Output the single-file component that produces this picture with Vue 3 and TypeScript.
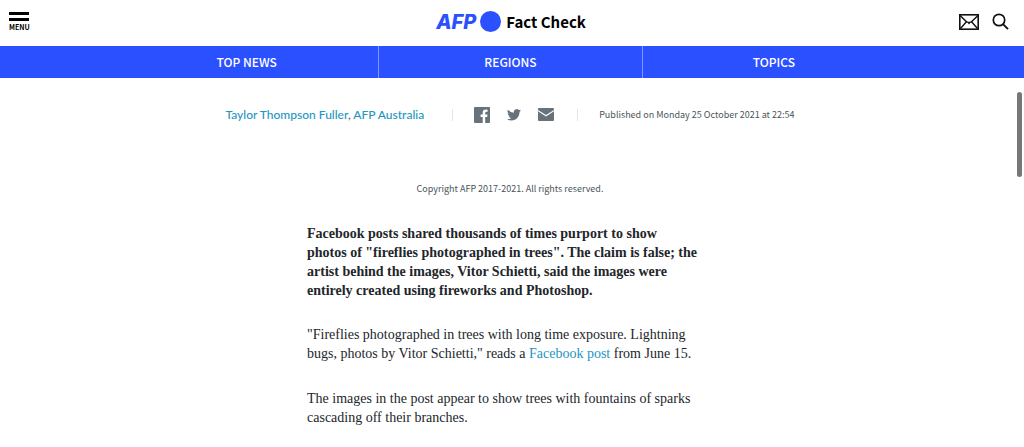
<script setup lang="ts">
interface NavItem {
  label: string
  href: string
}

const navItems: NavItem[] = [
  { label: 'TOP NEWS', href: '#top-news' },
  { label: 'REGIONS', href: '#regions' },
  { label: 'TOPICS', href: '#topics' },
]
</script>

<template>
  <div class="page">
    <header class="header">
      <button class="menu" type="button">
        <span class="bar"></span>
        <span class="bar"></span>
        <span class="menu-label">MENU</span>
      </button>
      <a class="brand" href="#home">
        <span class="afp">AFP</span>
        <span class="dot"></span>
        <span class="brand-name">Fact Check</span>
      </a>
      <div class="tools">
        <a href="#contact" aria-label="Contact">
          <svg width="20" height="16" viewBox="0 0 20 16" fill="none" stroke="#111">
            <rect x="0.8" y="0.8" width="18.4" height="14.4" stroke-width="1.6" />
            <path d="M1 1.500 7.800 8.100 9 8.100 10 9.300 11 8.100 12.200 8.100 19 1.500M1.500 14.500 7.200 8M18.500 14.500 12.800 8" stroke-width="1.4" />
          </svg>
        </a>
        <button class="search" type="button" aria-label="Search">
          <svg width="17" height="17" viewBox="0 0 17 17" fill="none" stroke="#111">
            <circle cx="7" cy="7" r="5.7" stroke-width="1.7" />
            <path d="M11 11.2 16 16.2" stroke-width="1.9" />
          </svg>
        </button>
      </div>
    </header>

    <nav class="nav">
      <div class="nav-inner">
        <a v-for="item in navItems" :key="item.label" class="nav-item" :href="item.href">{{ item.label }}</a>
      </div>
    </nav>

    <main class="content">
      <div class="meta">
        <span class="author"><a href="#author">Taylor Thompson Fuller</a>, <a href="#office">AFP Australia</a></span>
        <div class="share">
          <a href="#facebook" aria-label="Share on Facebook">
            <svg width="16" height="16" viewBox="0 0 16 16" fill="#68727b">
              <path d="M1 0H15Q16 0 16 1V15Q16 16 15 16H11.2V9.9H13.2L13.5 7.5H11.2V6Q11.2 4.8 12.4 4.8H13.6V2.7Q12.8 2.5 11.8 2.5Q8.7 2.5 8.7 5.7V7.5H6.6V9.9H8.7V16H1Q0 16 0 15V1Q0 0 1 0Z" />
            </svg>
          </a>
          <a href="#twitter" aria-label="Share on Twitter">
            <svg width="14" height="12" viewBox="0 0 24 20" fill="#68727b">
              <path d="M24 2.4a10 10 0 0 1-2.8.8A5 5 0 0 0 23.300.4a10 10 0 0 1-3.100 1.200A4.900 4.900 0 0 0 11.800 6.100 14 14 0 0 1 1.700.9 4.900 4.900 0 0 0 3.200 7.500 5 5 0 0 1 1 6.900 4.900 4.900 0 0 0 4.900 11.800a5 5 0 0 1-2.200.1 4.900 4.900 0 0 0 4.600 3.400A9.900 9.900 0 0 1 0 17.300 14 14 0 0 0 7.500 19.500C16.600 19.500 21.500 12 21.500 4.900A10 10 0 0 0 24 2.400Z" />
            </svg>
          </a>
          <a href="#email" aria-label="Share by email">
            <svg width="16" height="13" viewBox="0 0 16 13" fill="#68727b">
              <path d="M1 0H15Q16 0 16 1V1.900L8 7 0 1.900V1Q0 0 1 0ZM0 3.300 8 8.400 16 3.300V12Q16 13 15 13H1Q0 13 0 12Z" />
            </svg>
          </a>
        </div>
        <time class="published" datetime="2021-10-25T22:54">Published on Monday 25 October 2021 at 22:54</time>
      </div>

      <p class="copyright">Copyright AFP 2017-2021. All rights reserved.</p>

      <article class="article">
        <p class="lead">
          Facebook posts shared thousands of times purport to show<br />
          photos of "fireflies photographed in trees". The claim is false; the<br />
          artist behind the images, Vitor Schietti, said the images were<br />
          entirely created using fireworks and Photoshop.
        </p>
        <p>
          "Fireflies photographed in trees with long time exposure. Lightning<br />
          bugs, photos by Vitor Schietti," reads a <a href="#post">Facebook post</a> from June 15.
        </p>
        <p>
          The images in the post appear to show trees with fountains of sparks<br />
          cascading off their branches.
        </p>
      </article>
    </main>
    <div class="scroll-thumb"></div>
  </div>
</template>

<style>
body {
  margin: 0;
  background: #fff;
}
</style>

<style scoped>
.page {
  position: relative;
  font-family: "Noto Sans CJK SC", "Open Sans", sans-serif;
  color: #22262a;
}
a {
  color: #2496bf;
  text-decoration: none;
}
button {
  padding: 0;
  border: 0;
  background: none;
  font: inherit;
  color: inherit;
}
svg {
  display: block;
}
.header {
  display: grid;
  grid-template-columns: 1fr auto 1fr;
  align-items: center;
  height: 46px;
  padding: 0 15px 3px 9px;
  box-sizing: border-box;
}
.menu {
  display: flex;
  flex-direction: column;
  gap: 3px;
  width: 20px;
  color: #000;
}
.bar {
  height: 3px;
  background: #000;
}
.menu-label {
  font-size: 7px;
  line-height: 7px;
  font-weight: 700;
}
.brand {
  display: flex;
  align-items: center;
  padding-left: 4px;
  color: #000;
}
.afp {
  color: #2b50ff;
  font: italic 800 20px/24px Inter, sans-serif;
}
.dot {
  width: 21px;
  height: 21px;
  margin: 0 5px 0 4px;
  border-radius: 50%;
  background: #2b50ff;
}
.brand-name {
  font-size: 15px;
  line-height: 24px;
  font-weight: 700;
}
.tools {
  display: flex;
  justify-content: flex-end;
  align-items: center;
  gap: 13px;
}
.nav {
  padding-right: 4px;
  background: #2b50ff;
}
.nav-inner {
  display: grid;
  grid-template-columns: repeat(3, 1fr);
  max-width: 790px;
  margin: 0 auto;
}
.nav-item {
  color: #fff;
  font-size: 12px;
  line-height: 32px;
  font-weight: 500;
  text-align: center;
}
.nav-item + .nav-item {
  border-left: 1px solid #8298ff;
}
.content {
  padding: 28px 4px 20px 0;
}
.meta {
  display: flex;
  justify-content: center;
  align-items: center;
  height: 17px;
}
.author {
  color: #5b6166;
  font-family: Lato, sans-serif;
  font-size: 12px;
  line-height: 16px;
  font-weight: 500;
}
.share {
  display: flex;
  align-items: center;
  gap: 17px;
  height: 12px;
  margin: 0 21px 0 28px;
  padding: 0 23px 0 21px;
  border: solid #e3e5e7;
  border-width: 0 1px;
}
.published {
  color: #4c555b;
  font-size: 9px;
  line-height: 16px;
}
.copyright {
  margin: 58px 0 27px;
  color: #4c555b;
  font-size: 9px;
  line-height: 16px;
  text-align: center;
}
.article {
  max-width: 406px;
  margin: 0 auto;
  font-family: "Liberation Serif", serif;
  font-size: 14px;
  line-height: 19px;
}
.article p {
  margin: 0 0 26px;
}
.article p:last-child {
  margin-bottom: 0;
}
.article .lead {
  margin-bottom: 25px;
  font-weight: 700;
}
.scroll-thumb {
  position: absolute;
  top: 92px;
  right: 2px;
  width: 5px;
  height: 85px;
  border-radius: 3px;
  background: #777;
}
</style>
